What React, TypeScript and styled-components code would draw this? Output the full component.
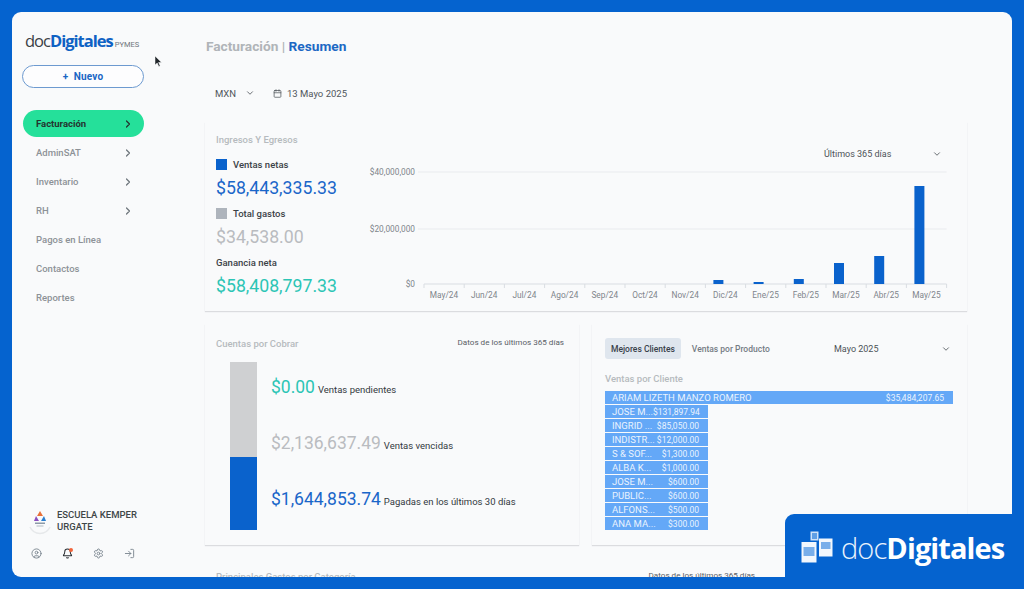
import React from 'react'
import styled, { createGlobalStyle } from 'styled-components'
import { ChevronDown, ChevronRight, Calendar, CircleUser, Bell, Settings, LogIn } from 'lucide-react'

const GlobalStyle = createGlobalStyle`
  html, body {
    margin: 0;
    height: 100%;
    overflow: hidden;
    background: #0563cf;
    font-family: Roboto, "Liberation Sans", sans-serif;
  }
  * { box-sizing: border-box; }
`

const Page = styled.div`
  position: relative;
  width: 1024px;
  height: 589px;
  padding: 12px 12px 12px 12px;
  overflow: hidden;
`
const Window = styled.div`
  display: flex;
  width: 1000px;
  height: 565px;
  background: #f9fafb;
  border-radius: 9px;
  overflow: hidden;
`
const Sidebar = styled.aside`
  display: flex;
  flex-direction: column;
  flex: none;
  width: 171px;
  padding: 18px 0 18px 10px;
`
const Logo = styled.div`
  display: flex;
  align-items: baseline;
  padding-left: 3px;
  height: 23px;
  font-family: "Open Sans", sans-serif;
  font-size: 16.5px;
  line-height: 21px;
  letter-spacing: -1px;
  color: #3a4045;
`
const LogoBold = styled.b`
  font-weight: 700;
  color: #0f62c4;
`
const LogoTag = styled.span`
  margin-left: 2px;
  font-family: Roboto, sans-serif;
  font-size: 7.5px;
  letter-spacing: 0;
  color: #6d747a;
`
const NewButton = styled.button`
  width: 122px;
  height: 23px;
  margin-top: 12px;
  background: #fdfdfe;
  border: 1px solid #6d9ad0;
  border-radius: 12px;
  color: #1a66c4;
  font: 700 10px Roboto, sans-serif;
  letter-spacing: 0.2px;
`
const Nav = styled.nav`
  display: flex;
  flex-direction: column;
  gap: 2px;
  margin: 22px 0 0 1px;
`
const NavItem = styled.div<{ $active?: boolean }>`
  display: flex;
  align-items: center;
  justify-content: space-between;
  width: 121px;
  height: 27px;
  padding: 0 10px 0 13px;
  border-radius: 14px;
  background: ${p => (p.$active ? '#25e09a' : 'transparent')};
  color: ${p => (p.$active ? '#24342f' : '#8d9297')};
  font-size: 9.5px;
  font-weight: ${p => (p.$active ? 700 : 500)};
  svg { color: ${p => (p.$active ? '#24342f' : '#6f767d')}; }
`
const SideFoot = styled.div`
  display: flex;
  flex-direction: column;
  gap: 13px;
  margin-top: auto;
`
const Company = styled.div`
  display: flex;
  align-items: center;
  gap: 4px;
  padding-left: 5px;
  color: #3e4648;
  font-size: 9.5px;
  font-weight: 500;
  line-height: 12px;
`
const FootIcons = styled.div`
  display: flex;
  gap: 20px;
  padding-left: 9px;
  color: #7b858f;
`
const BellWrap = styled.span`
  position: relative;
  display: flex;
  color: #2b2f33;
`
const BellDot = styled.i`
  position: absolute;
  top: 0;
  right: 0;
  width: 4px;
  height: 4px;
  border-radius: 50%;
  background: #f2643a;
`
const Main = styled.main`
  flex: 1;
  min-width: 0;
  padding: 27px 45px 0 22px;
`
const Title = styled.h1`
  margin: 0;
  padding-left: 1px;
  font-size: 13.7px;
  line-height: 15px;
  font-weight: 700;
  color: #b0b4b8;
`
const TitleStrong = styled.span`
  color: #1c68c4;
`
const Filters = styled.div`
  display: flex;
  align-items: center;
  height: 24px;
  margin-top: 27px;
  padding-left: 10px;
  font-size: 9.5px;
  font-weight: 400;
  color: #50565b;
`
const Currency = styled.span`
  display: flex;
  align-items: center;
  gap: 9px;
  width: 58px;
`
const DateField = styled.span`
  display: flex;
  align-items: center;
  gap: 5px;
`
const Card = styled.section`
  background: #f9fafb;
  box-shadow: 0 1px 1px rgba(60, 70, 80, 0.16);
`
const IncomeCard = styled(Card)`
  display: flex;
  height: 189px;
  margin-top: 17px;
  padding: 12px 0 0 11px;
`
const Totals = styled.div`
  flex: none;
  width: 149px;
`
const CardTitle = styled.h2`
  margin: 0;
  font-size: 9.5px;
  line-height: 11px;
  font-weight: 500;
  color: #b6babe;
`
const Legend = styled.div<{ $first?: boolean }>`
  display: flex;
  align-items: center;
  gap: 6px;
  height: 12px;
  margin-top: ${p => (p.$first ? '13px' : '7px')};
  font-size: 9.5px;
  font-weight: 500;
  color: #3c4247;
`
const Swatch = styled.i<{ $color: string }>`
  width: 11px;
  height: 11px;
  background: ${p => p.$color};
`
const Money = styled.div<{ $color: string }>`
  margin-top: 6px;
  height: 24px;
  font-size: 17.7px;
  line-height: 24px;
  color: ${p => p.$color};
`
const ChartColumn = styled.div`
  flex: 1;
  display: flex;
  flex-direction: column;
  align-items: flex-end;
  padding-top: 10px;
`
const PeriodSelect = styled.div`
  display: flex;
  align-items: center;
  justify-content: space-between;
  flex: none;
  width: 131px;
  height: 20px;
  margin-right: 21px;
  padding: 0 4px 0 9px;
  font-size: 9px;
  font-weight: 400;
  color: #4d5358;
`
const ChartSvg = styled.svg`
  display: block;
  margin-top: 2px;
  font-family: Roboto, sans-serif;
  font-size: 8.3px;
  fill: #7f858b;
`
const Columns = styled.div`
  display: grid;
  grid-template-columns: 374px 375px;
  gap: 13px;
  margin-top: 13px;
`
const ReceivableCard = styled(Card)`
  height: 221px;
  padding: 13px 15px 0 11px;
`
const HeadRow = styled.div`
  display: flex;
  align-items: center;
  justify-content: space-between;
`
const PeriodNote = styled.span`
  padding-bottom: 3px;
  font-size: 8.1px;
  color: #5a6066;
`
const Receivable = styled.div`
  display: flex;
  gap: 14px;
  margin-top: 12px;
  padding-left: 14px;
`
const StackBar = styled.div`
  display: flex;
  flex-direction: column;
  flex: none;
  width: 27px;
  height: 168px;
  background: #cfd0d2;
`
const StackFill = styled.div`
  margin-top: auto;
  height: 73px;
  background: #0a62cc;
`
const ReceivableRows = styled.div`
  display: flex;
  flex-direction: column;
  gap: 28px;
  padding-top: 13px;
`
const ReceivableRow = styled.div`
  display: flex;
  align-items: baseline;
  gap: 3px;
  height: 28px;
  font-size: 9.5px;
  line-height: 24px;
  color: #33393e;
`
const Amount = styled.span<{ $color: string }>`
  font-size: 17.5px;
  color: ${p => p.$color};
`
const ClientsCard = styled(Card)`
  height: 221px;
  padding: 14px 12px 0 13px;
`
const Tabs = styled.div`
  display: flex;
  align-items: center;
  gap: 11px;
`
const Tab = styled.span<{ $active?: boolean }>`
  display: flex;
  align-items: center;
  height: 21px;
  padding: 0 ${p => (p.$active ? '6px' : '0')};
  border-radius: 3px;
  background: ${p => (p.$active ? '#dfe6ee' : 'transparent')};
  color: ${p => (p.$active ? '#38414a' : '#757c84')};
  font-size: 8.5px;
  font-weight: 500;
`
const MonthSelect = styled(PeriodSelect)`
  margin: 0;
  padding: 0 4px 0 10px;
`
const ClientsTitle = styled(CardTitle)`
  margin-top: 14px;
`
const ClientsList = styled.div`
  display: flex;
  flex-direction: column;
  gap: 1px;
  margin-top: 7px;
`
const ClientBar = styled.div<{ $wide?: boolean }>`
  display: flex;
  align-items: center;
  justify-content: space-between;
  width: ${p => (p.$wide ? '348px' : '103px')};
  height: 13px;
  padding: 0 9px 0 7px;
  background: #64a8f7;
  color: #eaf3fe;
  font-size: 9.5px;
  white-space: nowrap;
`
const ClientValue = styled.span`
  font-size: 8.5px;
`
const NextRow = styled(HeadRow)`
  margin-top: 25px;
  padding: 0 212px 0 11px;
`
const Badge = styled.div`
  position: absolute;
  right: 0;
  bottom: 0;
  display: flex;
  align-items: center;
  gap: 8px;
  width: 239px;
  height: 75px;
  padding: 0 0 9px 16px;
  background: #0563cf;
  border-radius: 9px 0 0 0;
`
const BadgeName = styled.div`
  font-family: "Open Sans", sans-serif;
  font-size: 29px;
  font-weight: 300;
  letter-spacing: -0.9px;
  color: #e9f2fc;
`
const BadgeBold = styled.b`
  font-weight: 700;
  color: #fff;
`
const Pointer = styled.svg`
  position: absolute;
  left: 154px;
  top: 55px;
`

const months = ['May/24', 'Jun/24', 'Jul/24', 'Ago/24', 'Sep/24', 'Oct/24', 'Nov/24', 'Dic/24', 'Ene/25', 'Feb/25', 'Mar/25', 'Abr/25', 'May/25']
const bars: Record<number, number> = { 7: 4, 8: 2, 9: 5, 10: 21, 11: 28, 12: 98 }
const clients = [
  ['ARIAM LIZETH MANZO ROMERO', '$35,484,207.65'],
  ['JOSE M...', '$131,897.94'],
  ['INGRID ...', '$85,050.00'],
  ['INDISTR...', '$12,000.00'],
  ['S & SOF...', '$1,300.00'],
  ['ALBA K...', '$1,000.00'],
  ['JOSE M...', '$600.00'],
  ['PUBLIC...', '$600.00'],
  ['ALFONS...', '$500.00'],
  ['ANA MA...', '$300.00'],
]
const navItems: [string, boolean][] = [
  ['AdminSAT', true],
  ['Inventario', true],
  ['RH', true],
  ['Pagos en Línea', false],
  ['Contactos', false],
  ['Reportes', false],
]

const IncomeChart = () => {
  const left = 59
  const step = 40.2
  const base = 118
  const right = left + step * 13
  return (
    <ChartSvg width={602} height={134}>
      <line x1={53} x2={right} y1={6} y2={6} stroke="#e9ebee" />
      <line x1={53} x2={right} y1={63} y2={63} stroke="#e9ebee" />
      <line x1={left} x2={right} y1={base} y2={base} stroke="#d9dde2" />
      <text x={50} y={9} textAnchor="end">$40,000,000</text>
      <text x={50} y={66} textAnchor="end">$20,000,000</text>
      <text x={50} y={121} textAnchor="end">$0</text>
      {months.map((m, i) => {
        const x = left + step * i
        return (
          <g key={i}>
            <line x1={x} x2={x} y1={base} y2={base + 4} stroke="#d9dde2" />
            <text x={x + 20} y={base + 14} textAnchor="middle">{m}</text>
            {bars[i] && <rect x={x + 8} y={base - bars[i]} width={10} height={bars[i]} fill="#0a62cc" />}
          </g>
        )
      })}
      <line x1={right} x2={right} y1={base} y2={base + 4} stroke="#d9dde2" />
    </ChartSvg>
  )
}

const SchoolMark = () => (
  <svg width="26" height="28" viewBox="0 0 26 28">
    <path d="M3 20a11 11 0 0 0 20 0" fill="none" stroke="#e6e8ea" strokeWidth="1.5" />
    <path d="M13 4l3 5h-6z" fill="#e8703a" />
    <path d="M9 9l3 5H7z" fill="#8a4fc0" />
    <path d="M17 9l2 5h-5z" fill="#2a7fd0" />
    <rect x="8" y="15.5" width="10" height="1.5" fill="#8c9aa8" />
    <rect x="9.5" y="18.5" width="7" height="1" fill="#b4bcc4" />
  </svg>
)

const DocsMark = () => (
  <svg width="32" height="32" viewBox="0 0 32 32">
    <rect x="9.5" y="0.5" width="8" height="9" fill="#cfe2f8" />
    <rect x="11" y="2" width="5" height="6" fill="#5f9fe6" />
    <rect x="0.5" y="11" width="15" height="20.5" fill="#f2f7fd" />
    <rect x="2.5" y="16" width="11" height="9" fill="#78aeea" />
    <rect x="18" y="7.5" width="13.5" height="18" fill="#f2f7fd" />
    <rect x="20" y="11" width="9.5" height="7" fill="#78aeea" />
  </svg>
)

const App = () => {
  return (
    <Page>
      <GlobalStyle />
      <Window>
        <Sidebar>
          <Logo>
            doc<LogoBold>Digitales</LogoBold>
            <LogoTag>PYMES</LogoTag>
          </Logo>
          <NewButton>+&nbsp; Nuevo</NewButton>
          <Nav>
            <NavItem $active>
              Facturación
              <ChevronRight size={12} strokeWidth={2.5} />
            </NavItem>
            {navItems.map(([label, more]) => (
              <NavItem key={label}>
                {label}
                {more && <ChevronRight size={12} strokeWidth={2.5} />}
              </NavItem>
            ))}
          </Nav>
          <SideFoot>
            <Company>
              <SchoolMark />
              <span>ESCUELA KEMPER<br />URGATE</span>
            </Company>
            <FootIcons>
              <CircleUser size={11} />
              <BellWrap>
                <Bell size={11} strokeWidth={2.2} />
                <BellDot />
              </BellWrap>
              <Settings size={11} />
              <LogIn size={11} />
            </FootIcons>
          </SideFoot>
        </Sidebar>
        <Main>
          <Title>
            Facturación | <TitleStrong>Resumen</TitleStrong>
          </Title>
          <Filters>
            <Currency>
              MXN
              <ChevronDown size={10} />
            </Currency>
            <DateField>
              <Calendar size={9} />
              13 Mayo 2025
            </DateField>
          </Filters>
          <IncomeCard>
            <Totals>
              <CardTitle>Ingresos Y Egresos</CardTitle>
              <Legend $first>
                <Swatch $color="#0a62cc" />
                Ventas netas
              </Legend>
              <Money $color="#1a66c9">$58,443,335.33</Money>
              <Legend>
                <Swatch $color="#aeb4bc" />
                Total gastos
              </Legend>
              <Money $color="#b9bcc0">$34,538.00</Money>
              <Legend>Ganancia neta</Legend>
              <Money $color="#2cc5b5">$58,408,797.33</Money>
            </Totals>
            <ChartColumn>
              <PeriodSelect>
                Últimos 365 días
                <ChevronDown size={10} />
              </PeriodSelect>
              <IncomeChart />
            </ChartColumn>
          </IncomeCard>
          <Columns>
            <ReceivableCard>
              <HeadRow>
                <CardTitle>Cuentas por Cobrar</CardTitle>
                <PeriodNote>Datos de los últimos 365 días</PeriodNote>
              </HeadRow>
              <Receivable>
                <StackBar>
                  <StackFill />
                </StackBar>
                <ReceivableRows>
                  <ReceivableRow>
                    <Amount $color="#2cc5b5">$0.00</Amount> Ventas pendientes
                  </ReceivableRow>
                  <ReceivableRow>
                    <Amount $color="#b9bcc0">$2,136,637.49</Amount> Ventas vencidas
                  </ReceivableRow>
                  <ReceivableRow>
                    <Amount $color="#1a66c9">$1,644,853.74</Amount> Pagadas en los últimos 30 días
                  </ReceivableRow>
                </ReceivableRows>
              </Receivable>
            </ReceivableCard>
            <ClientsCard>
              <HeadRow>
                <Tabs>
                  <Tab $active>Mejores Clientes</Tab>
                  <Tab>Ventas por Producto</Tab>
                </Tabs>
                <MonthSelect>
                  Mayo 2025
                  <ChevronDown size={10} />
                </MonthSelect>
              </HeadRow>
              <ClientsTitle>Ventas por Cliente</ClientsTitle>
              <ClientsList>
                {clients.map(([name, value], i) => (
                  <ClientBar key={i} $wide={i === 0}>
                    <span>{name}</span>
                    <ClientValue>{value}</ClientValue>
                  </ClientBar>
                ))}
              </ClientsList>
            </ClientsCard>
          </Columns>
          <NextRow>
            <CardTitle>Principales Gastos por Categoría</CardTitle>
            <PeriodNote>Datos de los últimos 365 días</PeriodNote>
          </NextRow>
        </Main>
      </Window>
      <Pointer width="9" height="13" viewBox="0 0 9 13">
        <path d="M1 1v9l2.2-2 1.6 3.6 1.4-.6-1.6-3.5H7.6z" fill="#22272b" stroke="#fff" strokeWidth="0.5" />
      </Pointer>
      <Badge>
        <DocsMark />
        <BadgeName>
          doc<BadgeBold>Digitales</BadgeBold>
        </BadgeName>
      </Badge>
    </Page>
  )
}

export default App
